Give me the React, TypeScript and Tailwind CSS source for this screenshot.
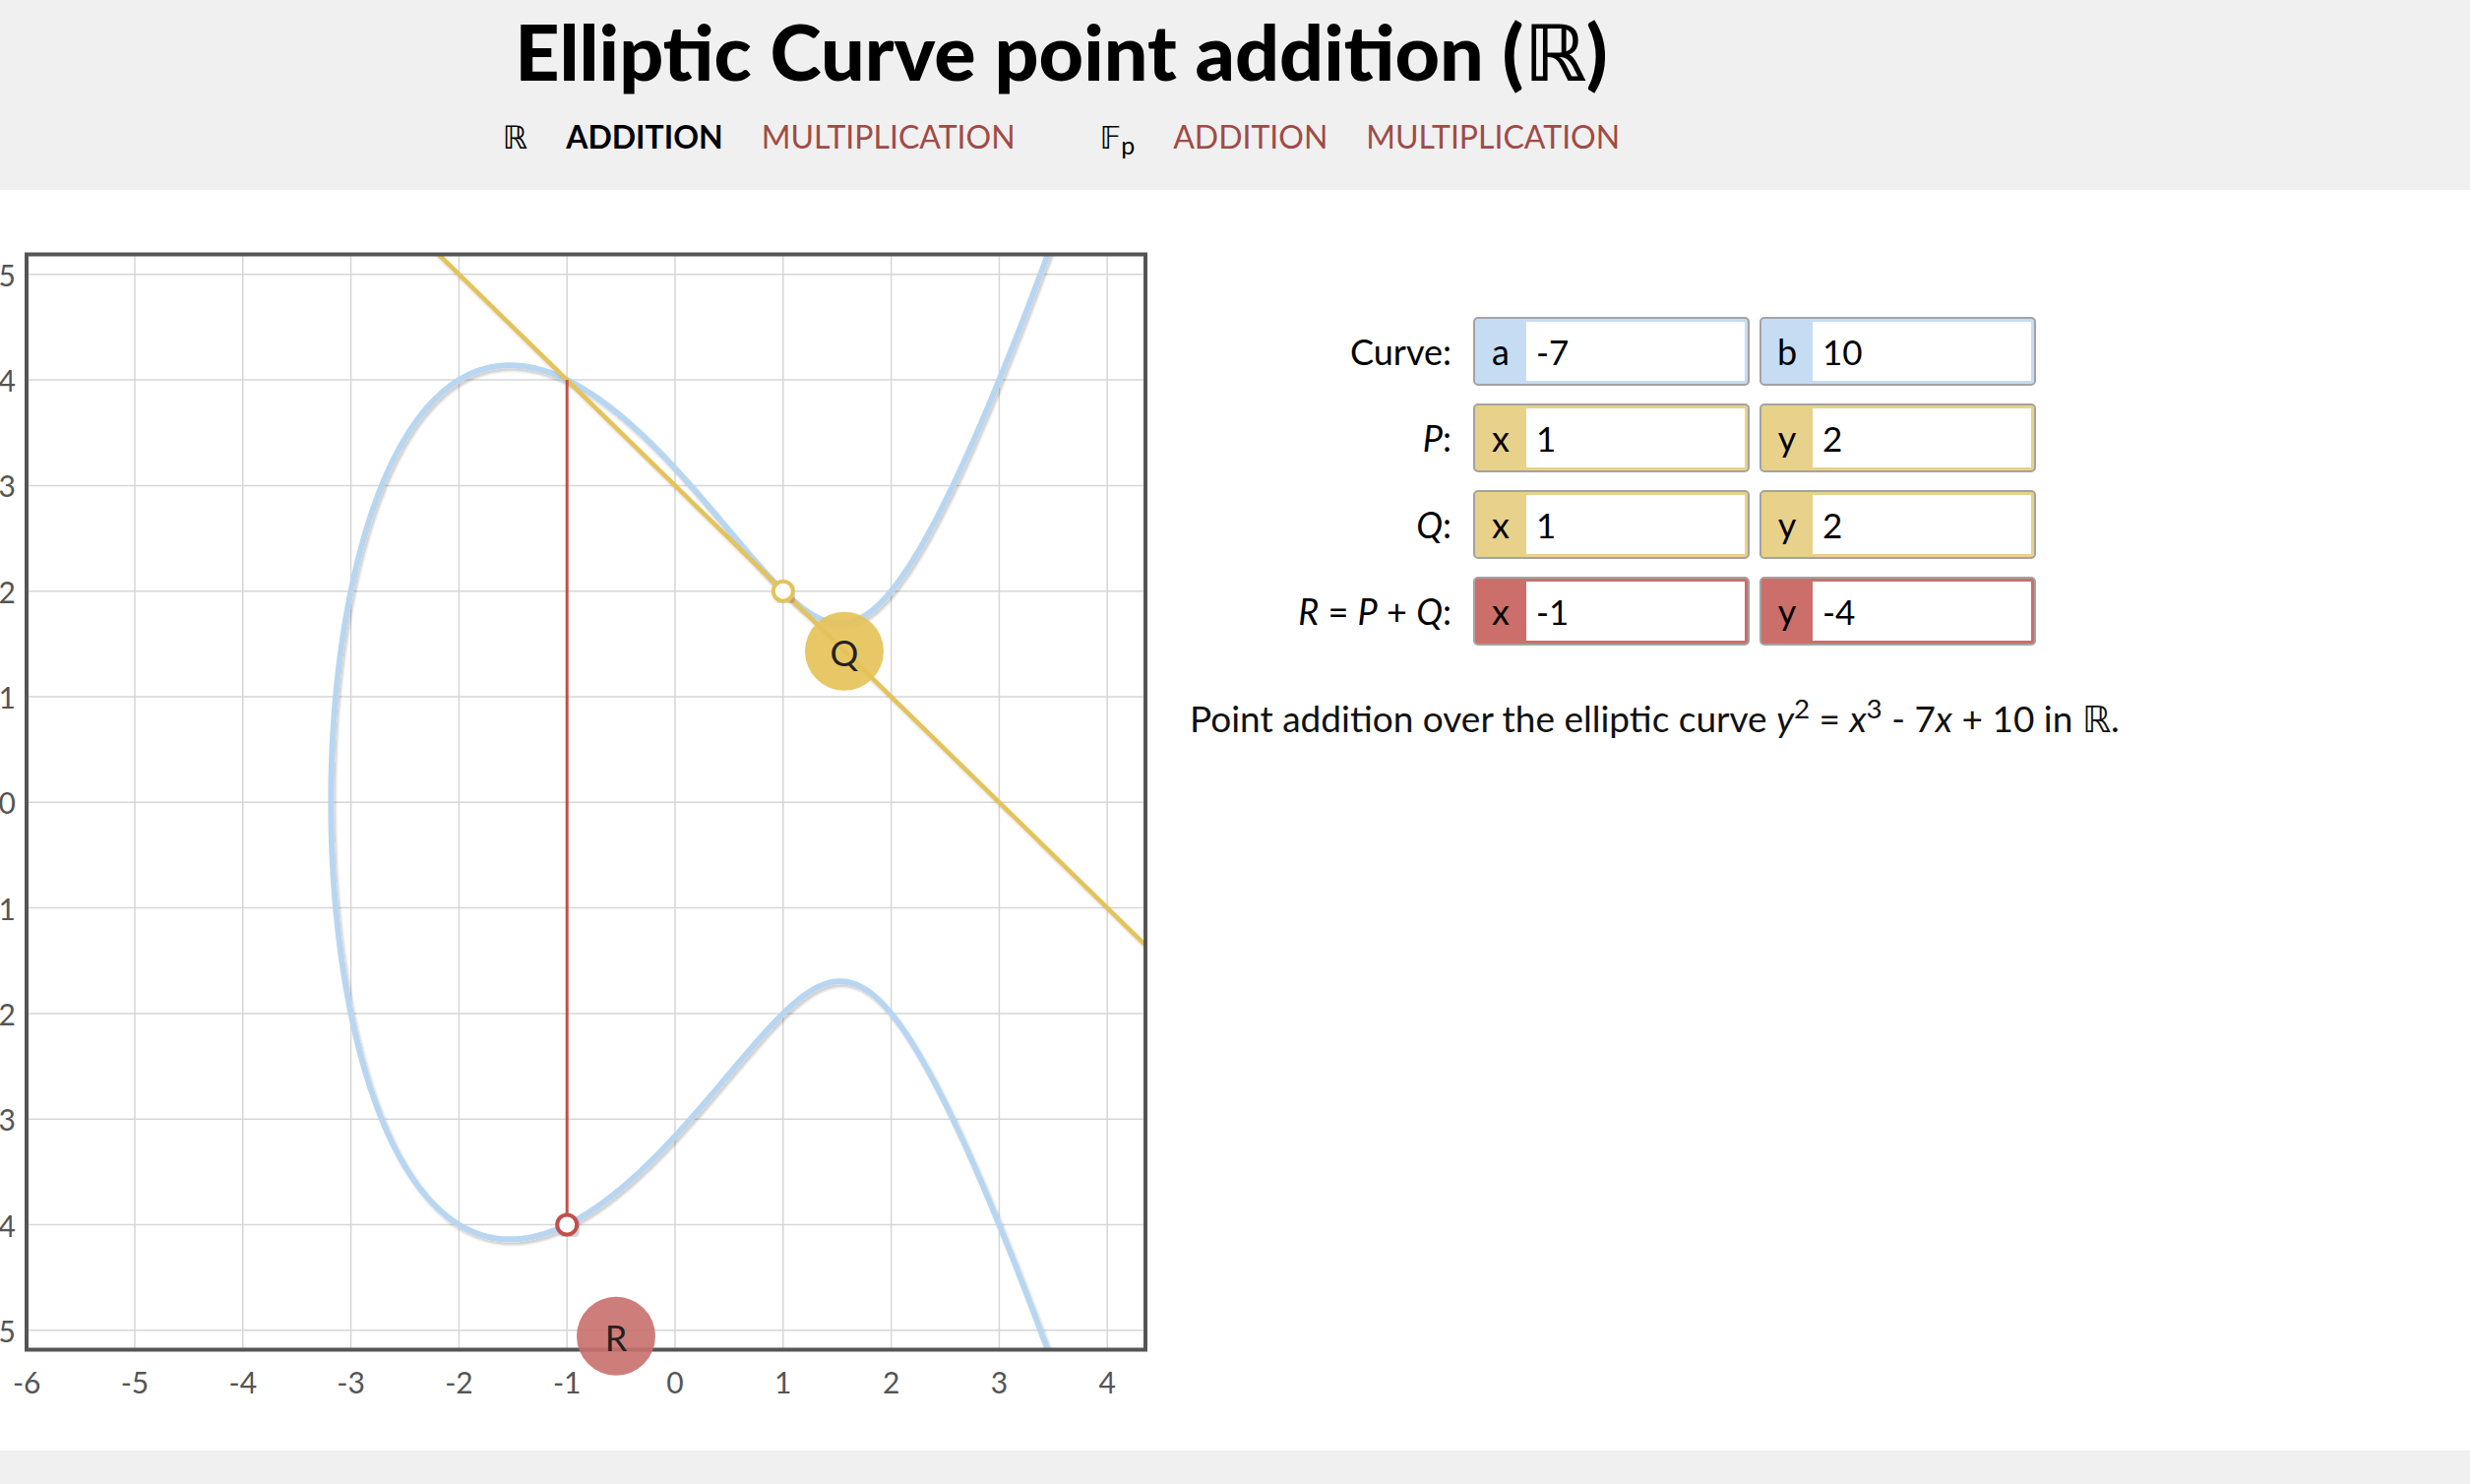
import React from 'react';

const FONT = { fontFamily: "'Source Sans Pro', Lato, 'DejaVu Sans', sans-serif" };

// plot mapping (svg local coords, svg top sits at page y=193)
const X = (x: number) => 686 + 109.8 * x;
const Y = (y: number) => 622.3 - 107.3 * y;

const FRAME = { left: 27, right: 1164, top: 65.5, bottom: 1178.5 };

const f = (x: number) => x * x * x - 7 * x + 10;

function curvePath() {
  let lo = -4;
  let hi = -3;
  for (let i = 0; i < 60; i++) {
    const mid = (lo + hi) / 2;
    if (f(mid) < 0) lo = mid;
    else hi = mid;
  }
  const r = (lo + hi) / 2;
  const T = Math.sqrt(4.6 - r);
  const pts: string[] = [];
  const n = 600;
  for (let i = 0; i <= n; i++) {
    const t = -T + (2 * T * i) / n;
    const x = r + t * t;
    const y = Math.sign(t) * Math.sqrt(Math.max(0, f(x)));
    pts.push(`${X(x).toFixed(2)},${Y(y).toFixed(2)}`);
  }
  return 'M' + pts.join(' L');
}

function Plot() {
  const d = curvePath();
  const xs = [-5, -4, -3, -2, -1, 0, 1, 2, 3, 4];
  const ys = [5, 4, 3, 2, 1, 0, -1, -2, -3, -4, -5];
  const labelsX = [-6, -5, -4, -3, -2, -1, 0, 1, 2, 3, 4];
  return (
    <svg width={1209} height={1281} className="block shrink-0" style={FONT}>
      <defs>
        <clipPath id="frame">
          <rect x={FRAME.left} y={FRAME.top} width={FRAME.right - FRAME.left} height={FRAME.bottom - FRAME.top} />
        </clipPath>
        <filter id="shadow" x="-10%" y="-10%" width="120%" height="120%">
          <feDropShadow dx="2" dy="3" stdDeviation="1" floodColor="#000" floodOpacity="0.18" />
        </filter>
      </defs>

      {/* grid */}
      <g stroke="#d6d6d6" strokeWidth={1.5}>
        {xs.map((x) => (
          <line key={'gx' + x} x1={X(x)} x2={X(x)} y1={FRAME.top} y2={FRAME.bottom} />
        ))}
        {ys.map((y) => (
          <line key={'gy' + y} x1={FRAME.left} x2={FRAME.right} y1={Y(y)} y2={Y(y)} />
        ))}
      </g>

      <g clipPath="url(#frame)">
        <path d={d} fill="none" stroke="#b9d6f1" strokeWidth={6} filter="url(#shadow)" />
        <line x1={X(-2.3)} y1={Y(5.3)} x2={X(4.5)} y2={Y(-1.5)} stroke="#e5c25a" strokeWidth={4.5} filter="url(#shadow)" />
        <line x1={X(-1)} y1={Y(4)} x2={X(-1)} y2={Y(-4)} stroke="#c0504d" strokeWidth={3} />
        <circle cx={X(1)} cy={Y(2)} r={10} fill="#fff" stroke="#e5c25a" strokeWidth={4} filter="url(#shadow)" />
        <circle cx={X(-1)} cy={Y(-4)} r={10} fill="#fff" stroke="#c0504d" strokeWidth={4} filter="url(#shadow)" />
      </g>

      {/* frame */}
      <rect
        x={FRAME.left}
        y={FRAME.top}
        width={FRAME.right - FRAME.left}
        height={FRAME.bottom - FRAME.top}
        fill="none"
        stroke="#555"
        strokeWidth={4}
      />

      {/* axis labels (the y labels run off the left edge, as in the original) */}
      <g fill="#555" fontSize={30}>
        {ys.map((y) => (
          <text key={'ly' + y} x={16} y={Y(y)} textAnchor="end" dominantBaseline="central">
            {y}
          </text>
        ))}
        {labelsX.map((x) => (
          <text key={'lx' + x} x={X(x)} y={1223} textAnchor="middle">
            {x}
          </text>
        ))}
      </g>

      {/* point bubbles */}
      <g>
        <circle cx={858} cy={468.7} r={40} fill="#e6c35a" opacity={0.93} />
        <text x={858} y={470} textAnchor="middle" dominantBaseline="central" fontSize={36} fill="#222">
          Q
        </text>
        <circle cx={626} cy={1164.7} r={40} fill="#c9706b" opacity={0.9} />
        <text x={626} y={1166} textAnchor="middle" dominantBaseline="central" fontSize={36} fill="#222">
          R
        </text>
      </g>
    </svg>
  );
}

type Tone = 'blue' | 'yellow' | 'red';

const toneBg: Record<Tone, string> = {
  blue: 'bg-[#c6dcf3]',
  yellow: 'bg-[#e8d18a]',
  red: 'bg-[#cc6e6a]',
};

function Field({ name, value, tone }: { name: string; value: string; tone: Tone }) {
  return (
    <div className={`flex h-[70px] w-[281px] rounded-[5px] border-2 border-[#a3a3a3] py-[3px] pr-[3px] ${toneBg[tone]}`}>
      <div className="flex w-[52px] items-center justify-center text-[36px] text-black">{name}</div>
      <div className="flex flex-1 items-center bg-white pl-[10px] text-[35px] text-black">{value}</div>
    </div>
  );
}

function Row({ label, children }: { label: React.ReactNode; children: React.ReactNode }) {
  return (
    <div className="flex h-[70px] items-center">
      <div className="w-[288px] pr-[22px] text-right text-[36px] text-black">{label}</div>
      <div className="flex gap-[10px]">{children}</div>
    </div>
  );
}

export default function App() {
  return (
    <div className="flex h-[1508px] w-[2510px] flex-col bg-white" style={FONT}>
      {/* header */}
      <header className="h-[193px] shrink-0 bg-[#f0f0f0]">
        <div className="flex w-[2157px] flex-col items-center">
          <h1 className="pt-[12px] text-[79px] font-black leading-[79px] text-black">
            Elliptic Curve point addition (ℝ)
          </h1>
          <nav className="mt-[31px] flex gap-[86px] text-[32px] leading-[34px]">
            <div className="flex gap-[39px]">
              <span className="text-black">ℝ</span>
              <span className="font-bold text-black">ADDITION</span>
              <span className="text-[#a04b45]">MULTIPLICATION</span>
            </div>
            <div className="flex gap-[39px]">
              <span className="text-black">
                𝔽<sub className="text-[25px]">p</sub>
              </span>
              <span className="text-[#a04b45]">ADDITION</span>
              <span className="text-[#a04b45]">MULTIPLICATION</span>
            </div>
          </nav>
        </div>
      </header>

      {/* main */}
      <main className="flex flex-1">
        <Plot />
        <div className="pt-[129px]">
          <div className="flex flex-col gap-[18px]">
            <Row label="Curve:">
              <Field name="a" value="-7" tone="blue" />
              <Field name="b" value="10" tone="blue" />
            </Row>
            <Row label={<><i>P</i>:</>}>
              <Field name="x" value="1" tone="yellow" />
              <Field name="y" value="2" tone="yellow" />
            </Row>
            <Row label={<><i>Q</i>:</>}>
              <Field name="x" value="1" tone="yellow" />
              <Field name="y" value="2" tone="yellow" />
            </Row>
            <Row label={<><i>R</i> = <i>P</i> + <i>Q</i>:</>}>
              <Field name="x" value="-1" tone="red" />
              <Field name="y" value="-4" tone="red" />
            </Row>
          </div>
          <p className="mt-[52px] text-[37px] leading-[44px] text-[#111]">
            Point addition over the elliptic curve <i>y</i>
            <sup>2</sup> = <i>x</i>
            <sup>3</sup> - 7<i>x</i> + 10 in ℝ.
          </p>
        </div>
      </main>

      <footer className="h-[34px] shrink-0 bg-[#f0f0f0]" />
    </div>
  );
}
